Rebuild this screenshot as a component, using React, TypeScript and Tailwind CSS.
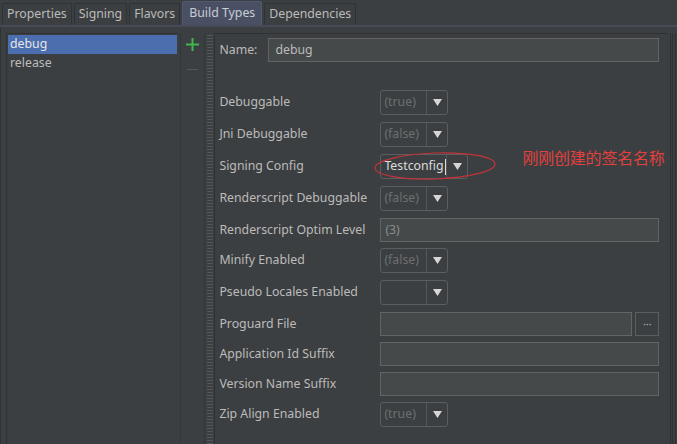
import React from 'react';

const tabs = ['Properties', 'Signing', 'Flavors', 'Build Types', 'Dependencies'];

function Combo({ value, wide, active }: { value: string; wide?: boolean; active?: boolean }) {
  return (
    <div
      className={`flex h-[25px] rounded-[3px] border border-[#5b5e60] bg-[#3c3f41] ${wide ? 'w-[88px]' : 'w-[68px]'}`}
    >
      <div
        className={`flex grow items-center border-r border-[#55585a] pl-[3px] ${active ? 'text-[#dcdcdc]' : 'text-[#6c6f71]'}`}
      >
        {value}
        {active && <span className="ml-[1px] h-[16px] w-[1px] bg-[#dcdcdc]" />}
      </div>
      <div className="flex w-[20px] items-center justify-center">
        <svg width="9" height="7" viewBox="0 0 9 7">
          <path d="M0 0h9L4.5 7z" fill="#d6d6d6" />
        </svg>
      </div>
    </div>
  );
}

function Field({ value, className = '' }: { value?: string; className?: string }) {
  return (
    <div
      className={`flex h-[24px] items-center border border-[#646464] bg-[#45494a] px-[4px] text-[#8a8d8f] ${className}`}
    >
      {value}
    </div>
  );
}

const rows: { label: string; h: string; control: React.ReactNode }[] = [
  { label: 'Debuggable', h: 'h-[32px]', control: <Combo value="(true)" /> },
  { label: 'Jni Debuggable', h: 'h-[32px]', control: <Combo value="(false)" /> },
  { label: 'Signing Config', h: 'h-[32px]', control: <Combo value="Testconfig" wide active /> },
  { label: 'Renderscript Debuggable', h: 'h-[32px]', control: <Combo value="(false)" /> },
  { label: 'Renderscript Optim Level', h: 'h-[30px]', control: <Field value="(3)" className="w-[279px]" /> },
  { label: 'Minify Enabled', h: 'h-[32px]', control: <Combo value="(false)" /> },
  { label: 'Pseudo Locales Enabled', h: 'h-[32px]', control: <Combo value="" /> },
  {
    label: 'Proguard File',
    h: 'h-[30px]',
    control: (
      <div className="flex gap-[3px]">
        <Field className="w-[252px] bg-[#484b48]" />
        <div className="flex h-[24px] w-[24px] items-center justify-center border border-[#5b5e60] text-[10px] leading-none text-[#bbbbbb]">
          ···
        </div>
      </div>
    ),
  },
  { label: 'Application Id Suffix', h: 'h-[30px]', control: <Field className="w-[279px]" /> },
  { label: 'Version Name Suffix', h: 'h-[30px]', control: <Field className="w-[279px]" /> },
  { label: 'Zip Align Enabled', h: 'h-[30px]', control: <Combo value="(true)" /> },
];

export default function App() {
  return (
    <div
      className="flex h-[444px] w-[677px] flex-col overflow-hidden bg-[#3c3f41] text-[12.3px] text-[#bbbbbb]"
      style={{ fontFamily: '"Noto Sans", "Noto Sans CJK SC", sans-serif' }}
    >
      {/* tab bar */}
      <div className="flex h-[27px] items-end gap-[2px] border-b-2 border-[#474a59] pl-[2px]">
        {tabs.map((t) => (
          <div
            key={t}
            className={`flex h-[22px] items-center rounded-t-[2px] border border-b-0 px-[4px] ${
              t === 'Build Types' ? 'h-[24px] border-[#535a70] bg-[#4a5064] px-[6px] text-[#c8ccd4]' : 'border-[#2f3133] bg-[#3c3f41]'
            }`}
          >
            {t}
          </div>
        ))}
      </div>

      {/* content */}
      <div className="flex min-h-0 grow border-l border-[#2f3133] pl-[5px] pt-[6px]">
        {/* list */}
        <div className="w-[172px] border-l border-t border-[#2f3133] pl-[1px] pt-[1px]">
          <div className="flex h-[19px] items-center bg-[#4b6eaf] pl-[2px] text-[#e6e6e6]">debug</div>
          <div className="flex h-[19px] items-center pl-[2px]">release</div>
        </div>

        {/* toolbar */}
        <div className="ml-[3px] flex w-[25px] flex-col items-center border-x border-[#343638] pt-[5px]">
          <svg width="13" height="13" viewBox="0 0 13 13">
            <path d="M5.5 0h2v5.5H13v2H7.5V13h-2V7.5H0v-2h5.5z" fill="#3fb64f" />
          </svg>
          <div className="mt-[18px] h-[1px] w-[11px] bg-[#55585a]" />
        </div>

        {/* splitter */}
        <div className="ml-[2px] w-[6px] bg-[repeating-linear-gradient(0deg,#55585a_0px,#55585a_1px,#3c3f41_1px,#3c3f41_3px)]" />

        {/* form */}
        <div className="relative ml-[1px] w-[455px] border-l border-t border-[#2f3133] pl-[4px] pt-[4px]">
          <div className="flex h-[52px] items-start">
            <div className="flex h-[24px] w-[49px] items-center">Name:</div>
            <div className="flex h-[24px] w-[391px] items-center border border-[#646464] bg-[#45494a] px-[6px] text-[#bbbbbb]">
              debug
            </div>
          </div>
          {rows.map((r) => (
            <div key={r.label} className={`flex items-start ${r.h}`}>
              <div className="flex h-[25px] w-[161px] items-center">{r.label}</div>
              {r.control}
            </div>
          ))}

          {/* annotation */}
          <svg className="absolute left-[158px] top-[117px]" width="124" height="32" viewBox="0 0 124 32">
            <ellipse cx="62" cy="15" rx="60" ry="13" fill="none" stroke="#c2343a" strokeWidth="1.2" transform="rotate(-2 62 15)" />
          </svg>
          <div className="absolute left-[307px] top-[112px] text-[16px] tracking-[-0.2px] text-[#e2403f]">
            刚刚创建的签名名称
          </div>
        </div>

        {/* right edge */}
        <div className="ml-[2px] w-[3px] border-x border-[#2f3133]" />
        <div className="ml-[2px] w-[2px] border-l border-[#2f3133]" />
      </div>
    </div>
  );
}
